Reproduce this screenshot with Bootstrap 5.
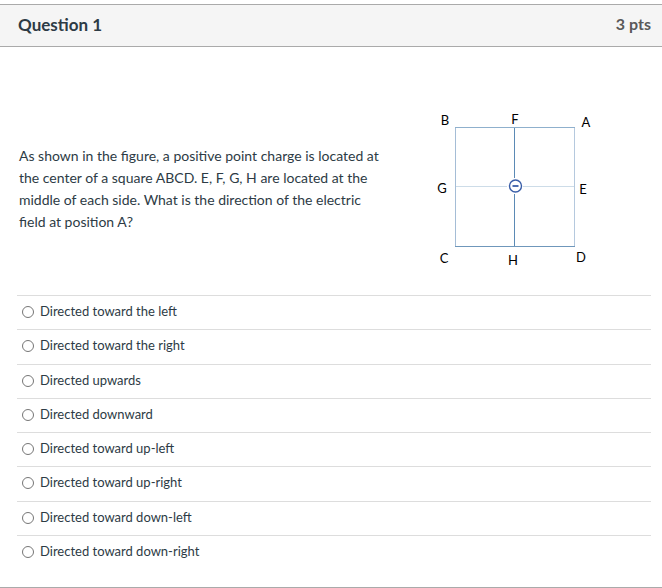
<!DOCTYPE html>
<html lang="en">
<head>
<meta charset="utf-8">
<meta name="viewport" content="width=device-width, initial-scale=1">
<title>Question 1</title>
<link href="https://cdn.jsdelivr.net/npm/bootstrap@5.3.0/dist/css/bootstrap.min.css" rel="stylesheet">
<style>
body { font-family: Lato, sans-serif; color: #2d3b45; background: #fff; }
.question { padding-top: 4px; }
.question-head { background: #f5f5f5; border-top: 1px solid #aaa; border-bottom: 1px solid #aaa; padding: 0 11px 2px 18px; height: 43px; }
.question-head h1, .points { font-size: 17px; line-height: 24px; font-weight: 700; }
.points { color: #595959; font-size: 16px; padding-bottom: 2px; }
.question-body { border-bottom: 1px solid #aaa; padding: 58px 11px 18px 17px; }
.prompt { gap: 40px; padding: 0 51px 21px 2px; }
.prompt p { font-size: 14px; line-height: 22px; flex: 0 1 372px; padding-bottom: 2px; }
.figure-box { flex: 0 0 170px; }
.figure-box text { font-family: Lato, sans-serif; font-size: 13px; fill: #000; text-anchor: middle; }
.answers { display: grid; grid-auto-rows: 1fr; }
.answer { border-top: 1px solid #ddd; padding: 5px 0 8px 5px; gap: 6px; font-size: 13px; line-height: 20px; }
.answer input { appearance: none; width: 12px; height: 12px; margin: 5px 0 0; border: 1px solid #767676; border-radius: 50%; background: #fff; }
.answer input:checked { background: radial-gradient(#0075ff 50%, #fff 55%); }
</style>
<script src="https://cdn.jsdelivr.net/npm/bootstrap@5.3.0/dist/js/bootstrap.bundle.min.js" defer></script>
</head>
<body>
<main class="question d-flex flex-column min-vh-100">
  <header class="question-head d-flex justify-content-between align-items-center">
    <h1 class="mb-0">Question 1</h1>
    <span class="points">3 pts</span>
  </header>
  <form class="question-body d-flex flex-column flex-grow-1">
    <div class="prompt d-flex align-items-center justify-content-between">
      <p class="mb-0" id="prompt">As shown in the figure, a positive point charge is located at the center of a square ABCD. E, F, G, H are located at the middle of each side. What is the direction of the electric field at position A?</p>
      <div class="figure-box">
        <svg class="d-block" width="170" height="169" viewBox="0 0 170 169" role="img" aria-label="Square ABCD with a charge at its center">
          <g fill="none" stroke-width="1" shape-rendering="crispEdges">
            <path d="M25.500 22V141" stroke="#a5bdd6"/>
            <path d="M144.500 22V141" stroke="#b5c9de"/>
            <path d="M25 22.500H145" stroke="#8fb0cd"/>
            <path d="M25 141.500H145" stroke="#6f97bb"/>
            <path d="M26 81.500H77M93 81.500H144" stroke="#cddce8"/>
            <path d="M84.500 23V73M84.500 89V141" stroke="#5b8ab5"/>
          </g>
          <circle cx="85.500" cy="81" r="6" fill="#fff" stroke="#3a5ea8" stroke-width="1.400"/>
          <path d="M82.500 81H88.500" stroke="#3a5ea8" stroke-width="1.800"/>
          <text x="15" y="20">B</text>
          <text x="85" y="19">F</text>
          <text x="156" y="22">A</text>
          <text x="12" y="88">G</text>
          <text x="153" y="89">E</text>
          <text x="14" y="158">C</text>
          <text x="83" y="160">H</text>
          <text x="151" y="157">D</text>
        </svg>
      </div>
    </div>
    <div class="answers flex-grow-1" role="radiogroup" aria-labelledby="prompt">
      <label class="answer d-flex align-items-start"><input type="radio" name="answer"><span>Directed toward the left</span></label>
      <label class="answer d-flex align-items-start"><input type="radio" name="answer"><span>Directed toward the right</span></label>
      <label class="answer d-flex align-items-start"><input type="radio" name="answer"><span>Directed upwards</span></label>
      <label class="answer d-flex align-items-start"><input type="radio" name="answer"><span>Directed downward</span></label>
      <label class="answer d-flex align-items-start"><input type="radio" name="answer"><span>Directed toward up-left</span></label>
      <label class="answer d-flex align-items-start"><input type="radio" name="answer"><span>Directed toward up-right</span></label>
      <label class="answer d-flex align-items-start"><input type="radio" name="answer"><span>Directed toward down-left</span></label>
      <label class="answer d-flex align-items-start"><input type="radio" name="answer"><span>Directed toward down-right</span></label>
    </div>
  </form>
</main>
</body>
</html>
